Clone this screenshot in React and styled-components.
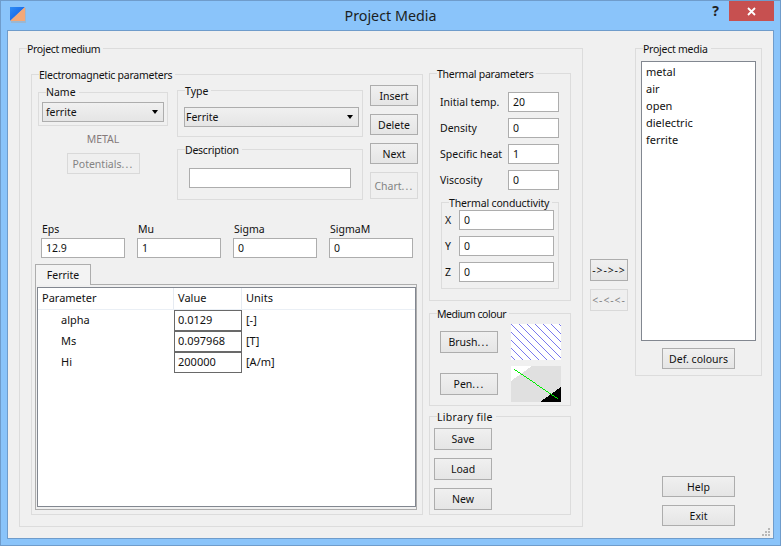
import React from "react";
import styled, { createGlobalStyle } from "styled-components";

const Global = createGlobalStyle`
  html, body { margin: 0; padding: 0; background: #8ac4fa; }
  * { box-sizing: border-box; }
  body { font-family: "Noto Sans", "DejaVu Sans", sans-serif; font-size: 10.5px; color: #111; }
  input, button { font: inherit; color: inherit; }
`;

const Frame = styled.div`
  width: 781px; height: 546px; display: flex; flex-direction: column;
  background: #8ac4fa; border: 1px solid #6f9ccb;
`;
const TitleBar = styled.header`
  height: 29px; display: grid; grid-template-columns: 1fr auto 1fr; padding: 0 6px;
`;
const TitleLogo = styled.svg`width: 17px; height: 16px; margin: 6px 0 0 3px; display: block;`;
const Title = styled.h1`
  margin: 0; font-size: 14.3px; font-weight: 400; line-height: 29px; color: #1b1f24;
`;
const TitleActions = styled.div`display: flex; justify-content: flex-end; align-items: flex-start;`;
const HelpMark = styled.span`
  font-size: 14px; font-weight: 700; line-height: 20px; margin-right: 10px; color: #222;
`;
const CloseBtn = styled.div`
  width: 45px; height: 20px; background: #c75050; display: flex; align-items: center; justify-content: center;
`;
const Client = styled.main`
  flex: 1; margin: 0 6px 6px; background: #f0f0f0; border: 1px solid #6f9ccb; position: relative;
  display: flex; padding: 17px 0 0 11px;
`;
const Group = styled.section`
  position: relative; flex: none; border: 1px solid #dcdcdc;
  width: ${(p) => p.$w}px; height: ${(p) => p.$h}px; margin-top: ${(p) => p.$mt || 0}px;
`;
const Legend = styled.span`
  position: absolute; left: 7px; top: ${(p) => p.$top ?? -7}px; background: #f0f0f0; padding-right: 3px;
  line-height: 14px; white-space: nowrap; letter-spacing: ${(p) => p.$ls ?? -0.25}px;
`;
const MediumBody = styled.div`
  display: grid; grid-template-columns: 392px 142px; column-gap: 6px; padding: 24px 0 0 11px; height: 100%;
`;
const EmBody = styled.div`display: flex; flex-direction: column; padding: 10px 0 0 3px;`;
const TopRow = styled.div`
  display: grid; grid-template-columns: 130px 186px 48px; height: 137px; margin-left: 3px;
`;
const NameCol = styled.div`display: flex; flex-direction: column; align-items: center; padding-top: 7px;`;
const NameBody = styled.div`padding: 9px 0 0 3px;`;
const Badge = styled.div`height: 27px; line-height: 27px; color: #857b7b;`;
const TypeCol = styled.div`
  display: flex; flex-direction: column; gap: 12px; padding-top: 5px; margin-left: 9px; width: 186px;
`;
const TypeBody = styled.div`padding: 16px 0 0 6px;`;
const DescBody = styled.div`padding: 18px 0 0 11px;`;
const ActionCol = styled.div`display: flex; flex-direction: column; gap: 8px; margin-left: 16px; width: 48px;`;
const Button = styled.button`
  flex: none; display: block; width: ${(p) => p.$w}px; height: ${(p) => p.$h || 22}px; padding: 0; white-space: nowrap;
  overflow: hidden; border: 1px solid ${(p) => (p.disabled ? "#d9d9d9" : "#adadad")};
  color: ${(p) => (p.disabled ? "#838383" : "#111")};
  background: ${(p) => (p.disabled ? "#efefef" : "linear-gradient(#f0f0f0, #e5e5e5)")};
`;
const Dots = styled.span`letter-spacing: 1.2px;`;
const ArrowButton = styled(Button)`font-size: 10.5px; letter-spacing: 0.9px;`;
const Combo = styled.div`
  width: ${(p) => p.$w}px; height: 20px; border: 1px solid #adadad; background: linear-gradient(#f0f0f0, #e5e5e5);
  display: flex; align-items: center; justify-content: space-between; padding: 0 5px 0 ${(p) => p.$pl ?? 3}px;
`;
const ComboArrow = styled.i`
  width: 0; height: 0; border-style: solid; border-width: 4px 3.5px 0; border-color: #000 transparent transparent;
`;
const Field = styled.input`
  display: block; width: ${(p) => p.$w}px; height: 20px; background: #fff; border: 1px solid #adadad;
  padding: 0 0 0 4px; outline: none; border-radius: 0;
`;
const FieldsRow = styled.div`
  display: grid; grid-template-columns: repeat(4, 84px); column-gap: 12px; margin-left: 6px; height: 42px;
`;
const FieldLabel = styled.label`display: block; height: 16px; line-height: 14px; padding-left: 1px;`;
const Tab = styled.div`
  width: 56px; height: 21px; margin-bottom: -1px; position: relative; z-index: 1; background: #f3f3f3;
  border: 1px solid #adadad; border-bottom: none; text-align: center; line-height: 20px;
`;
const TabPane = styled.div`
  width: 382px; height: 226px; border: 1px solid #adadad; padding: 2px 1px 2px; background: #f0f0f0;
`;
const TableFrame = styled.div`height: 100%; width: 379px; border: 1px solid #828790; background: #fff; font-size: 11px;`;
const TableRow = styled.div`
  display: grid; grid-template-columns: 136px 68px 1fr; height: ${(p) => p.$h || 21}px;
`;
const HeaderRow = styled(TableRow)`border-bottom: 1px solid #eaeff5;`;
const HeadCell = styled.div`
  padding-left: 4px; line-height: 20px; border-right: 1px solid #e6ebf2;
  &:last-child { border-right: none; }
`;
const NameCell = styled.div`padding-left: 23px; line-height: 20px;`;
const ValueCell = styled.div`border: 1px solid #696969; padding-left: 3px; line-height: 18px;`;
const UnitCell = styled.div`padding-left: 4px; line-height: 20px;`;
const SideBody = styled.div`display: flex; flex-direction: column;`;
const ThermalGrid = styled.div`
  display: grid; grid-template-columns: 68px 51px; row-gap: 6px; padding: 18px 0 0 10px; align-items: center;
`;
const CondBody = styled.div`
  display: grid; grid-template-columns: 14px 95px; row-gap: 6px; padding: 7px 0 0 3px; align-items: center;
`;
const CondWrap = styled.div`margin: 12px 0 0 11px;`;
const ColourGrid = styled.div`
  display: grid; grid-template-columns: 58px 50px; column-gap: 13px; row-gap: 6px; padding: 10px 0 0 10px; align-items: center;
`;
const Swatch = styled.svg`display: block; width: 50px; height: 36px;`;
const LibraryBody = styled.div`display: flex; flex-direction: column; gap: 8px; padding: 11px 0 0 4px;`;
const ArrowCol = styled.div`
  display: flex; flex-direction: column; gap: 8px; margin-left: 7px; padding-top: 211px; width: 38px; flex: none;
`;
const ProjectCol = styled.aside`
  display: flex; flex-direction: column; align-items: center; margin-left: 7px; width: 127px; flex: none;
`;
const ListBody = styled.div`display: flex; flex-direction: column; align-items: center; padding-top: 12px;`;
const MediaList = styled.ul`
  list-style: none; margin: 0 0 7px; padding: 1px 0 0 4px; width: 115px; height: 280px; background: #fff; border: 1px solid #828790;
  font-size: 11px;
`;
const MediaItem = styled.li`height: 17px; line-height: 17px;`;
const BottomBtns = styled.div`display: flex; flex-direction: column; gap: 8px; margin-top: 100px;`;
const Grip = styled.svg`position: absolute; right: 2px; bottom: 1px; width: 9px; height: 9px;`;

const hatch = [];
for (let y = 0; y < 36; y++) for (let x = 0; x < 50; x++) if (((x - y) % 8 + 8) % 8 === 0) hatch.push([x, y]);

const green = [];
for (let i = 0; i <= 43; i++) green.push([3 + i, Math.round(3 + (i * 29) / 43)]);

function Box({ title, w, h, mt, top, ls, children }) {
  return (
    <Group $w={w} $h={h} $mt={mt}>
      <Legend $top={top} $ls={ls}>{title}</Legend>
      {children}
    </Group>
  );
}

export default function App() {
  return (
    <Frame>
      <Global />
      <TitleBar>
        <div>
          <TitleLogo viewBox="0 0 17 16">
            <defs>
              <linearGradient id="logoBlue" x1="0" y1="0" x2="1" y2="1">
                <stop offset="0" stopColor="#2f8df5" />
                <stop offset="1" stopColor="#0a52e0" />
              </linearGradient>
            </defs>
            <rect x="1" y="1" width="15" height="15" fill="#a9a9a9" opacity=".5" />
            <polygon points="0,0 15,0 0,14" fill="url(#logoBlue)" />
            <polygon points="15,0 15,14 0,14" fill="#f2a878" />
          </TitleLogo>
        </div>
        <Title>Project Media</Title>
        <TitleActions>
          <HelpMark>?</HelpMark>
          <CloseBtn>
            <svg width="9" height="9" viewBox="0 0 9 9">
              <path d="M1 1L8 8M8 1L1 8" stroke="#fff" strokeWidth="1.8" />
            </svg>
          </CloseBtn>
        </TitleActions>
      </TitleBar>
      <Client>
        <Box title="Project medium" w={564} h={479} ls={-0.35}>
          <MediumBody>
            <Box title="Electromagnetic parameters" w={392} h={441} mt={1}>
              <EmBody>
                <TopRow>
                  <NameCol>
                    <Box title="Name" w={130} h={34} top={-8} ls={0}>
                      <NameBody>
                        <Combo $w={122}>ferrite<ComboArrow /></Combo>
                      </NameBody>
                    </Box>
                    <Badge>METAL</Badge>
                    <Button $w={73} $h={21} disabled>Potentials<Dots>...</Dots></Button>
                  </NameCol>
                  <TypeCol>
                    <Box title="Type" w={186} h={47} ls={0}>
                      <TypeBody>
                        <Combo $w={175} $pl={1}>Ferrite<ComboArrow /></Combo>
                      </TypeBody>
                    </Box>
                    <Box title="Description" w={186} h={51}>
                      <DescBody><Field $w={162} readOnly defaultValue="" /></DescBody>
                    </Box>
                  </TypeCol>
                  <ActionCol>
                    <Button $w={48} $h={21}>Insert</Button>
                    <Button $w={48} $h={21}>Delete</Button>
                    <Button $w={48} $h={21}>Next</Button>
                    <Button $w={48} $h={27} disabled>Chart<Dots>...</Dots></Button>
                  </ActionCol>
                </TopRow>
                <FieldsRow>
                  {[["Eps", "12.9"], ["Mu", "1"], ["Sigma", "0"], ["SigmaM", "0"]].map(([l, v]) => (
                    <div key={l}>
                      <FieldLabel>{l}</FieldLabel>
                      <Field $w={84} readOnly defaultValue={v} />
                    </div>
                  ))}
                </FieldsRow>
                <Tab>Ferrite</Tab>
                <TabPane>
                  <TableFrame>
                    <HeaderRow $h={22}>
                      <HeadCell>Parameter</HeadCell>
                      <HeadCell>Value</HeadCell>
                      <HeadCell>Units</HeadCell>
                    </HeaderRow>
                    {[["alpha", "0.0129", "[-]"], ["Ms", "0.097968", "[T]"], ["Hi", "200000", "[A/m]"]].map(([n, v, u]) => (
                      <TableRow key={n}>
                        <NameCell>{n}</NameCell>
                        <ValueCell>{v}</ValueCell>
                        <UnitCell>{u}</UnitCell>
                      </TableRow>
                    ))}
                  </TableFrame>
                </TabPane>
              </EmBody>
            </Box>
            <SideBody>
              <Box title="Thermal parameters" w={142} h={228}>
                <ThermalGrid>
                  {[["Initial temp.", "20"], ["Density", "0"], ["Specific heat", "1"], ["Viscosity", "0"]].map(([l, v]) => (
                    <React.Fragment key={l}>
                      <span>{l}</span>
                      <Field $w={51} readOnly defaultValue={v} />
                    </React.Fragment>
                  ))}
                </ThermalGrid>
                <CondWrap>
                  <Box title="Thermal conductivity" w={118} h={87} ls={-0.15}>
                    <CondBody>
                      {["X", "Y", "Z"].map((l) => (
                        <React.Fragment key={l}>
                          <span>{l}</span>
                          <Field $w={95} readOnly defaultValue="0" />
                        </React.Fragment>
                      ))}
                    </CondBody>
                  </Box>
                </CondWrap>
              </Box>
              <Box title="Medium colour" w={142} h={93} mt={12} ls={-0.45}>
                <ColourGrid>
                  <Button $w={58}>Brush<Dots>...</Dots></Button>
                  <Swatch viewBox="0 0 50 36" shapeRendering="crispEdges">
                    <rect width="50" height="36" fill="#fff" />
                    {hatch.map(([x, y]) => (
                      <rect key={`${x}-${y}`} x={x} y={y} width="1" height="1" fill="#7a7aee" />
                    ))}
                  </Swatch>
                  <Button $w={58}>Pen<Dots>...</Dots></Button>
                  <Swatch viewBox="0 0 50 36" shapeRendering="crispEdges">
                    <rect width="50" height="36" fill="#e0e0e0" />
                    <polygon points="0,0 21,0 0,15" fill="#fff" />
                    <polygon points="50,21 50,36 29,36" fill="#000" />
                    {green.map(([x, y]) => (
                      <rect key={x} x={x} y={y} width="1" height="1" fill="#00ee00" />
                    ))}
                  </Swatch>
                </ColourGrid>
              </Box>
              <Box title="Library file" w={142} h={99} mt={10} ls={0.3}>
                <LibraryBody>
                  <Button $w={58}>Save</Button>
                  <Button $w={58}>Load</Button>
                  <Button $w={58}>New</Button>
                </LibraryBody>
              </Box>
            </SideBody>
          </MediumBody>
        </Box>
        <ArrowCol>
          <ArrowButton $w={38}>-&gt;-&gt;-&gt;</ArrowButton>
          <ArrowButton $w={38} disabled>&lt;-&lt;-&lt;-</ArrowButton>
        </ArrowCol>
        <ProjectCol>
          <Box title="Project media" w={127} h={328}>
            <ListBody>
              <MediaList>
                {["metal", "air", "open", "dielectric", "ferrite"].map((m) => (
                  <MediaItem key={m}>{m}</MediaItem>
                ))}
              </MediaList>
              <Button $w={73} $h={21}>Def. colours</Button>
            </ListBody>
          </Box>
          <BottomBtns>
            <Button $w={73} $h={21}>Help</Button>
            <Button $w={73} $h={21}>Exit</Button>
          </BottomBtns>
        </ProjectCol>
        <Grip viewBox="0 0 9 9" fill="#b8b8b8">
          <rect x="6" y="0" width="2" height="2" />
          <rect x="3" y="3" width="2" height="2" />
          <rect x="6" y="3" width="2" height="2" />
          <rect x="0" y="6" width="2" height="2" />
          <rect x="3" y="6" width="2" height="2" />
          <rect x="6" y="6" width="2" height="2" />
        </Grip>
      </Client>
    </Frame>
  );
}
